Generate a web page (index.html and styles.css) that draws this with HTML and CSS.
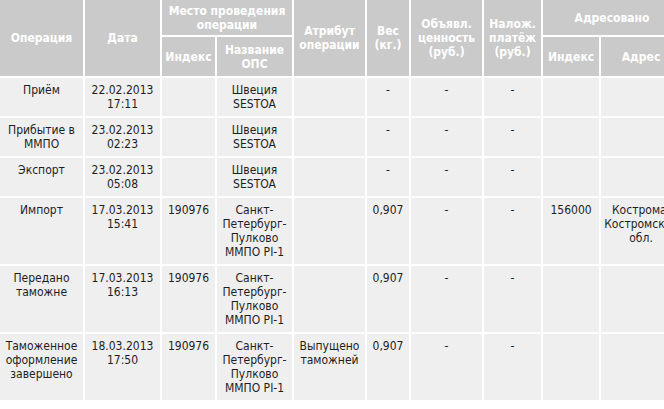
FILE: index.html
```html
<!DOCTYPE html>
<html lang="ru">
<head>
<meta charset="utf-8">
<title>Операции</title>
<link rel="stylesheet" href="styles.css">
</head>
<body>
<table class="ops">
  <colgroup>
    <col class="c1"><col class="c2"><col class="c3"><col class="c4"><col class="c5">
    <col class="c6"><col class="c7"><col class="c8"><col class="c9"><col class="c10">
  </colgroup>
  <thead>
    <tr class="h1">
      <th rowspan="2">Операция</th>
      <th rowspan="2">Дата</th>
      <th colspan="2">Место проведения операции</th>
      <th rowspan="2">Атрибут операции</th>
      <th rowspan="2">Вес (кг.)</th>
      <th rowspan="2">Объявл. ценность (руб.)</th>
      <th rowspan="2">Налож. платёж (руб.)</th>
      <th colspan="2">Адресовано</th>
    </tr>
    <tr class="h2">
      <th>Индекс</th>
      <th>Название ОПС</th>
      <th>Индекс</th>
      <th>Адрес</th>
    </tr>
  </thead>
  <tbody>
    <tr>
      <td>Приём</td><td>22.02.2013<br>17:11</td><td></td><td>Швеция<br>SESTOA</td><td></td>
      <td>-</td><td>-</td><td>-</td><td></td><td></td>
    </tr>
    <tr>
      <td>Прибытие в ММПО</td><td>23.02.2013<br>02:23</td><td></td><td>Швеция<br>SESTOA</td><td></td>
      <td>-</td><td>-</td><td>-</td><td></td><td></td>
    </tr>
    <tr>
      <td>Экспорт</td><td>23.02.2013<br>05:08</td><td></td><td>Швеция<br>SESTOA</td><td></td>
      <td>-</td><td>-</td><td>-</td><td></td><td></td>
    </tr>
    <tr>
      <td>Импорт</td><td>17.03.2013<br>15:41</td><td>190976</td><td>Санкт-Петербург-Пулково ММПО PI-1</td><td></td>
      <td>0,907</td><td>-</td><td>-</td><td>156000</td><td>Кострома, Костромская обл.</td>
    </tr>
    <tr>
      <td>Передано таможне</td><td>17.03.2013<br>16:13</td><td>190976</td><td>Санкт-Петербург-Пулково ММПО PI-1</td><td></td>
      <td>0,907</td><td>-</td><td>-</td><td></td><td></td>
    </tr>
    <tr>
      <td>Таможенное оформление завершено</td><td>18.03.2013<br>17:50</td><td>190976</td><td>Санкт-Петербург-Пулково ММПО PI-1</td><td>Выпущено таможней</td>
      <td>0,907</td><td>-</td><td>-</td><td></td><td></td>
    </tr>
  </tbody>
</table>
</body>
</html>
```
FILE: styles.css
```css
html, body {
  margin: 0;
  padding: 0;
  background: #ffffff;
  overflow: hidden;
}

.ops {
  table-layout: fixed;
  border-collapse: separate;
  border-spacing: 2px;
  margin: -2px 0 0 -2px;
  width: 685px;
  font-family: "DejaVu Sans Condensed", "DejaVu Sans", sans-serif;
  font-size: 12px;
  line-height: 14px;
}

.c1 { width: 83px; }
.c2 { width: 75px; }
.c3 { width: 53px; }
.c4 { width: 75px; }
.c5 { width: 71px; }
.c6 { width: 42px; }
.c7 { width: 71px; }
.c8 { width: 57px; }
.c9 { width: 56px; }
.c10 { width: 80px; }

.ops th {
  background: #cacaca;
  color: #ffffff;
  font-weight: bold;
  text-align: center;
  vertical-align: middle;
  padding: 2px 2px;
}

.h1 { height: 35px; }
.h2 { height: 39px; }

.ops td {
  background: #efefef;
  color: #1e1e1e;
  text-align: center;
  vertical-align: top;
  padding: 5px 3px;
  height: 28px;
}
```
